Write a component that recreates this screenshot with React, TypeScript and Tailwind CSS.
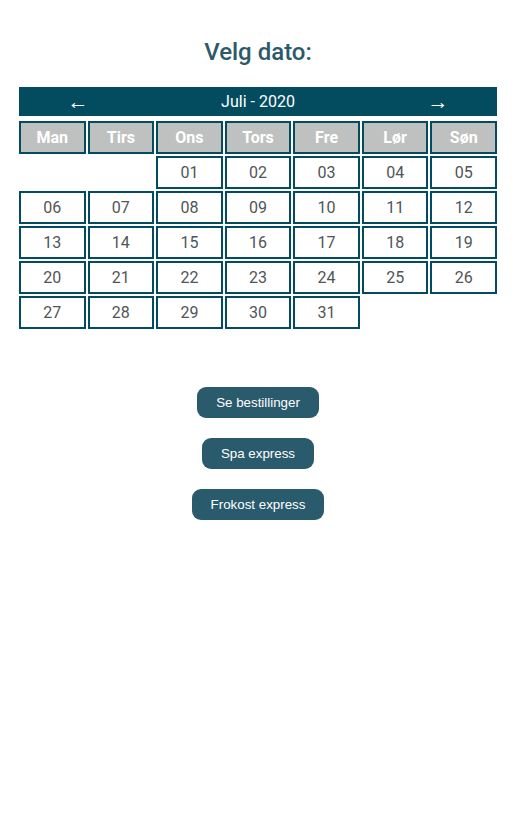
import React from "react";

const days = ["Man", "Tirs", "Ons", "Tors", "Fre", "Lør", "Søn"];
const cells: (string | null)[] = [
  null, null,
  ...Array.from({ length: 31 }, (_, i) => String(i + 1).padStart(2, "0")),
];

export default function App() {
  return (
    <div className="min-h-[815px] bg-white" style={{ fontFamily: "Roboto, 'Liberation Sans', sans-serif" }}>
      <div className="px-[19px] pt-[37px]">
        <h2 className="text-center text-[24px] font-medium leading-[30px] text-[#2c5a6a]">Velg dato:</h2>
        <div className="mt-[20px] flex h-[29px] items-center bg-[#034b5f] text-white">
          <button className="w-[118px] pt-[2px] text-center text-[21px] leading-none">←</button>
          <div className="flex-1 text-center text-[16px]">Juli - 2020</div>
          <button className="w-[118px] pt-[2px] text-center text-[21px] leading-none">→</button>
        </div>
        <div className="mt-[5px] grid grid-cols-7 gap-[2px]">
          {days.map((d) => (
            <div
              key={d}
              className="flex h-[33px] items-center justify-center border-2 border-[#034b5f] bg-[#bfc1c0] text-[16px] font-bold text-white"
            >
              {d}
            </div>
          ))}
          {cells.map((c, i) =>
            c ? (
              <div
                key={i}
                className="flex h-[33px] items-center justify-center border-2 border-[#034b5f] bg-white text-[16px] text-[#505558]"
              >
                {c}
              </div>
            ) : (
              <div key={i} className="h-[33px]" />
            )
          )}
        </div>
        <div
          className="mt-[58px] flex flex-col items-center gap-[20px]"
          style={{ fontFamily: "'Liberation Sans', Arial, sans-serif" }}
        >
          {["Se bestillinger", "Spa express", "Frokost express"].map((t) => (
            <button
              key={t}
              className="h-[31px] rounded-[9px] bg-[#2a5b6c] px-[19px] text-[13.33px] text-white"
            >
              {t}
            </button>
          ))}
        </div>
      </div>
    </div>
  );
}
